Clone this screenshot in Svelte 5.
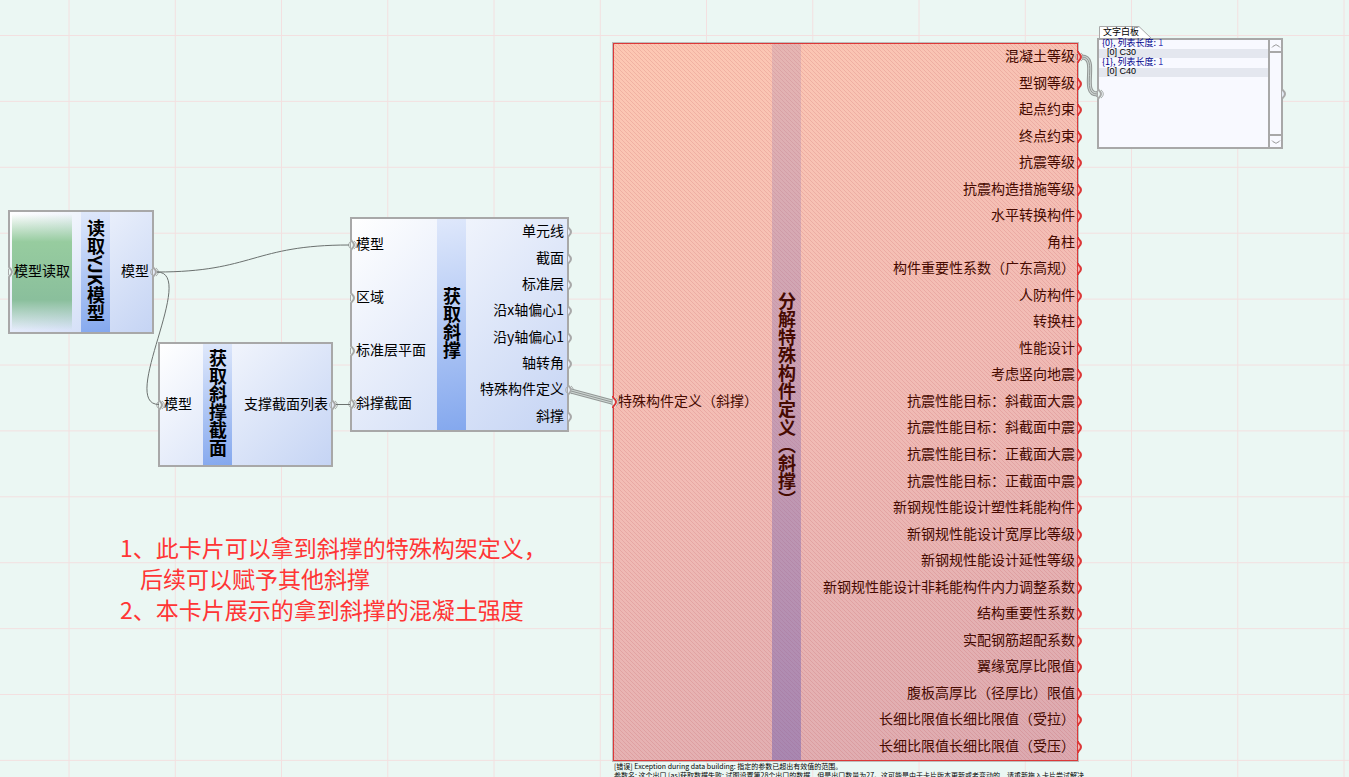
<script>
  const columns = Array.from({ length: 20 }, (_, i) => 69 + i * 106.25);
  const lines = Array.from({ length: 20 }, (_, i) => 35.5 + i * 65.9);

  const p = (text, linked = false) => ({ text, linked });

  const nodes = [
    {
      title: '读取YJK模型', x: 8, y: 210, w: 146, h: 124, kind: 'plain', picker: true,
      inputs: [p('模型读取')],
      outputs: [p('模型', true)]
    },
    {
      title: '获取斜撑截面', x: 158, y: 342, w: 175, h: 125, kind: 'plain',
      inputs: [p('模型', true)],
      outputs: [p('支撑截面列表', true)]
    },
    {
      title: '获取斜撑', x: 350, y: 217, w: 219, h: 215, kind: 'plain',
      inputs: [p('模型', true), p('区域'), p('标准层平面'), p('斜撑截面', true)],
      outputs: [
        p('单元线'), p('截面'), p('标准层'), p('沿x轴偏心1'), p('沿y轴偏心1'),
        p('轴转角'), p('特殊构件定义', true), p('斜撑')
      ]
    },
    {
      title: '分解特殊构件定义（斜撑）', x: 613, y: 43, w: 465, h: 718, kind: 'error',
      inputs: [p('特殊构件定义（斜撑）', true)],
      outputs: [
        p('混凝土等级', true), p('型钢等级'), p('起点约束'), p('终点约束'), p('抗震等级'),
        p('抗震构造措施等级'), p('水平转换构件'), p('角柱'), p('构件重要性系数（广东高规）'),
        p('人防构件'), p('转换柱'), p('性能设计'), p('考虑竖向地震'),
        p('抗震性能目标：斜截面大震'), p('抗震性能目标：斜截面中震'),
        p('抗震性能目标：正截面大震'), p('抗震性能目标：正截面中震'),
        p('新钢规性能设计塑性耗能构件'), p('新钢规性能设计宽厚比等级'),
        p('新钢规性能设计延性等级'), p('新钢规性能设计非耗能构件内力调整系数'),
        p('结构重要性系数'), p('实配钢筋超配系数'), p('翼缘宽厚比限值'),
        p('腹板高厚比（径厚比）限值'), p('长细比限值长细比限值（受拉）'),
        p('长细比限值长细比限值（受压）')
      ]
    }
  ];

  const thinWires = [
    'M157 272 C253 272 253 245 349 245',
    'M157 272 C198 272 118 404.500 159 404.500',
    'M336 404.500 H350'
  ];
  const listWires = ['M571 391 L612 402', 'M1082 57 C1099 57 1080 94 1097 94'];

  const branches = [
    { path: '{0}', count: 1, value: 'C30' },
    { path: '{1}', count: 1, value: 'C40' }
  ];
</script>

{#snippet grip(side, linked)}
  <svg class="grip {side}" viewBox="0 0 12 14" aria-hidden="true">
    <path class="gap" d="M3 1 V2 C3 3 6 4 6 7 C6 10 3 11 3 12 V13" />
    <path class="edge" d="M3 1 V2 C3 3 6 4 6 7 C6 10 3 11 3 12 V13" />
    {#if linked}
      <path class="halo" d="M3 3 C0 5 0 9 3 11 M6 3 C9 5 9 9 6 11" />
    {/if}
  </svg>
{/snippet}

<main class="canvas" lang="zh-CN">
  <svg class="layer" aria-hidden="true">
    {#each columns as x}<line class="grid" x1={x} x2={x} y1="0" y2="100%" />{/each}
    {#each lines as y}<line class="grid" x1="0" x2="100%" y1={y} y2={y} />{/each}
  </svg>

  {#each nodes as n}
    <section class="node {n.kind}" style="left:{n.x}px;top:{n.y}px;width:{n.w}px;height:{n.h}px">
      {#if n.kind === 'error'}
        <svg class="hatch" aria-hidden="true">
          <pattern id="hatch" width="4" height="4" patternUnits="userSpaceOnUse">
            <path d="M0 0h1v1h1v1h1v1h1v1h-1v-1h-1v-1h-1v-1h-1z" />
          </pattern>
          <rect width="100%" height="100%" fill="url(#hatch)" />
        </svg>
      {/if}
      <ul class="ports inputs" class:picker={n.picker}>
        {#each n.inputs as port}
          <li>{@render grip('in', port.linked)}<span>{port.text}</span></li>
        {/each}
      </ul>
      <h2>{n.title}</h2>
      <ul class="ports outputs">
        {#each n.outputs as port}
          <li><span>{port.text}</span>{@render grip('out', port.linked)}</li>
        {/each}
      </ul>
    </section>
  {/each}

  <section class="panel">
    <header>
      <svg viewBox="0 0 56 14" aria-hidden="true">
        <path d="M1.500 14 V1.500 H41 L54 14" />
      </svg>
      <h3>文字白板</h3>
    </header>
    <div class="sheet">
      {@render grip('in', true)}
      <dl>
        {#each branches as b}
          <dt>{b.path}, 列表长度: <i>{b.count}</i></dt>
          <dd>[0] {b.value}</dd>
        {/each}
      </dl>
      <div class="scroll">
        <button type="button" aria-label="向上滚动">
          <svg viewBox="0 0 10 6"><path d="M1 4.500 C2 2.500 4 3 5 1.500 C6 3 8 2.500 9 4.500" /></svg>
        </button>
        <button type="button" aria-label="向下滚动">
          <svg viewBox="0 0 10 6"><path d="M1 1.500 C2 3.500 4 3 5 4.500 C6 3 8 3.500 9 1.500" /></svg>
        </button>
      </div>
      {@render grip('out', false)}
    </div>
  </section>

  <svg class="layer" aria-hidden="true">
    {#each thinWires as d}<path class="wire" {d} />{/each}
    {#each listWires as d}
      <path class="list outer" {d} />
      <path class="list inner" {d} />
      <path class="list core" {d} />
    {/each}
  </svg>

  <div class="note">
    <p>1、此卡片可以拿到斜撑的特殊构架定义，</p>
    <p class="indent">后续可以赋予其他斜撑</p>
    <p>2、本卡片展示的拿到斜撑的混凝土强度</p>
  </div>

  <div class="message">
    <p>[错误] Exception during data building: 指定的参数已超出有效值的范围。</p>
    <p>参数名: 这个出口 [as]获取数据失败: 试图设置第28个出口的数据，但是出口数量为27。这可能是由于卡片版本更新或者变动的，请重新拖入卡片尝试解决</p>
  </div>
</main>

<style>
  :global(body) {
    margin: 0;
    background: #ebf7f3;
  }
  .canvas {
    position: relative;
    min-height: 100vh;
    overflow: hidden;
    font-family: 'Noto Sans CJK SC', 'Noto Sans', sans-serif;
    font-size: 14px;
    line-height: 20px;
    color: #000;
    --edge: #a8a8a8;
    --paper: #ebf7f3;
  }
  h2, h3, p, ul, dl, dt, dd {
    margin: 0;
    padding: 0;
  }
  .layer {
    position: absolute;
    inset: 0;
    width: 100%;
    height: 100%;
    pointer-events: none;
  }
  .grid {
    stroke: #f3e0e0;
    stroke-width: 1;
  }
  .wire {
    fill: none;
    stroke: #6b716f;
    stroke-width: 1;
  }
  .list {
    fill: none;
  }
  .outer {
    stroke: #929795;
    stroke-width: 5;
  }
  .inner {
    stroke: #cdd5d2;
    stroke-width: 3;
  }
  .core {
    stroke: #929795;
    stroke-width: 1;
  }

  .node {
    position: absolute;
    box-sizing: border-box;
    display: grid;
    grid-template-columns: max-content 29px 1fr;
    border: 2px solid var(--edge);
    background: linear-gradient(135deg, #fff, #c5d4f4);
  }
  .node h2 {
    display: flex;
    align-items: center;
    justify-content: center;
    box-sizing: border-box;
    padding-bottom: 4px;
    writing-mode: vertical-rl;
    font-size: 18px;
    line-height: 29px;
    font-weight: 700;
    white-space: nowrap;
    background: linear-gradient(170deg, #dfe8fb, #84a8ee);
  }
  .ports {
    position: relative;
    display: flex;
    flex-direction: column;
    list-style: none;
  }
  .ports li {
    position: relative;
    flex: 1;
    display: flex;
    align-items: center;
    box-sizing: border-box;
    padding-bottom: 4px;
    white-space: nowrap;
    min-height: 0;
  }
  .inputs li {
    padding-left: 4px;
    padding-right: 11px;
  }
  .outputs li {
    justify-content: flex-end;
    padding-right: 3px;
  }
  .picker {
    background: linear-gradient(180deg, #fff0, #97cc9f 24%, #8abf9c 74%, #fff0) 2px 2px / 60px calc(100% - 4px) no-repeat;
  }
  .error {
    --edge: #dc3838;
    border-width: 1px;
    box-shadow: 0 0 0 1px #a8a0a0aa;
    color: #460a00;
    background: linear-gradient(155deg, #fdc8b3, #f2bcb5 50%, #dba9b0);
  }
  .error h2 {
    position: relative;
    background: linear-gradient(180deg, #a080b03c, #7060b080);
  }
  .error .inputs li {
    padding-right: 14px;
  }
  .error .outputs li {
    padding-right: 2px;
  }
  .hatch {
    position: absolute;
    inset: 0;
    width: 100%;
    height: 100%;
    fill: #b8404828;
    shape-rendering: crispEdges;
  }

  .grip {
    position: absolute;
    top: calc(50% - 7px);
    width: 12px;
    height: 14px;
    overflow: visible;
    fill: none;
  }
  .grip.in {
    left: -4px;
  }
  .grip.out {
    right: -10px;
  }
  .gap {
    stroke: none;
    fill: #e4eaf4;
  }
  .in .gap {
    fill: var(--paper);
    stroke: var(--paper);
    stroke-width: 3;
  }
  .error .out .gap {
    fill: #f0b8b4;
  }
  .edge {
    stroke: var(--edge);
    stroke-width: 2;
  }
  .halo {
    stroke: #a9aeac;
    stroke-width: 1;
  }

  .panel {
    position: absolute;
    left: 1097px;
    top: 25px;
    width: 186px;
    font-size: 9px;
  }
  .panel header {
    position: relative;
    height: 13px;
    padding-left: 6px;
  }
  .panel header svg {
    position: absolute;
    left: 1px;
    top: 0;
    width: 56px;
    height: 14px;
    fill: #fff;
    stroke: #a8a8a8;
  }
  .panel h3 {
    position: relative;
    font-size: 9px;
    line-height: 14px;
    font-weight: 400;
  }
  .sheet {
    position: relative;
    box-sizing: border-box;
    display: flex;
    height: 111px;
    border: 2px solid var(--edge);
    background: #f8f9ff;
  }
  dl {
    flex: 1;
    margin-top: -1px;
  }
  dt {
    height: 10px;
    line-height: 7px;
    padding-left: 3px;
    color: #00008b;
  }
  dt i {
    font-style: normal;
    color: #3838b0;
  }
  dd {
    height: 9px;
    font-family: 'Liberation Sans', sans-serif;
    line-height: 7px;
    padding-left: 8px;
    background: #e4e7ef;
  }
  .scroll {
    display: flex;
    flex-direction: column;
    justify-content: space-between;
    width: 11px;
    border-left: 2px solid var(--edge);
  }
  .scroll button {
    display: flex;
    align-items: center;
    justify-content: center;
    height: 13px;
    padding: 0;
    border: 0 solid var(--edge);
    background: none;
  }
  .scroll button:first-child {
    border-bottom-width: 2px;
  }
  .scroll button:last-child {
    border-top-width: 2px;
  }
  .scroll svg {
    width: 10px;
    height: 6px;
    fill: none;
    stroke: #999;
  }

  .note {
    position: absolute;
    left: 120px;
    top: 532px;
    font-size: 23px;
    line-height: 31px;
    color: #ff3535;
    white-space: nowrap;
  }
  .indent {
    padding-left: 20px;
  }
  .message {
    position: absolute;
    left: 614px;
    top: 762px;
    font-size: 7px;
    line-height: 9px;
    white-space: nowrap;
  }
</style>
